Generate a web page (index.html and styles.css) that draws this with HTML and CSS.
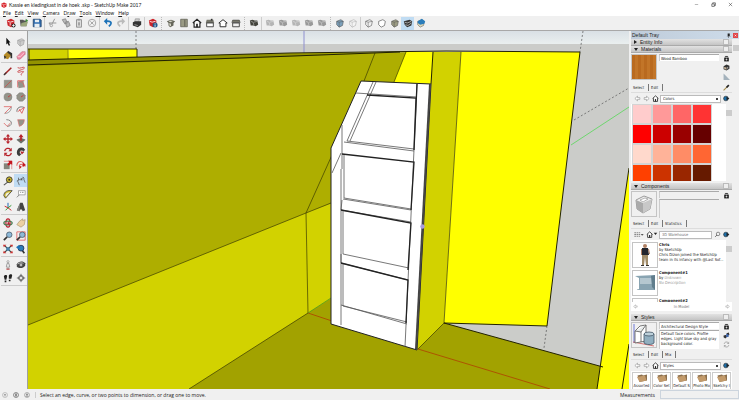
FILE: index.html
```html
<!DOCTYPE html>
<html lang="en">
  <head>
    <meta charset="UTF-8" />
    <meta name="viewport" content="width=device-width, initial-scale=1.0" />
    <title>Kassie en kledingkast in de hoek .skp - SketchUp Make 2017</title>
    <link rel="stylesheet" href="styles.css">
  </head>
  <body>
    <!-- Shared icons -->
    <svg class="sprite" aria-hidden="true">
      <symbol id="logo" viewBox="0 0 12 12"><path fill="#d9242b" d="M1 3l5-2 5 2v6l-5 3-5-3z"/><path fill="none" stroke="#fff" d="M2 4l4 2 4-2M4 7l2 1v3"/></symbol>
      <symbol id="cube" viewBox="0 0 12 12"><path stroke-width=".7" d="M2 4l5-2 3 2-1 5-4 2-3-3z"/><path fill="none" stroke-width=".6" d="M2 4l3 1 5-1M5 5v6"/></symbol>
      <symbol id="solid" viewBox="0 0 12 12"><path d="M1 3l3-1 3 1 3 0 1 5-3 2-3-1-3 0z"/><path fill="none" stroke="#eee" stroke-width=".5" d="M2 4l3 1 1 4M6 5l4-1"/></symbol>
      <symbol id="home" viewBox="0 0 12 12"><path fill="#fff" stroke="#222" stroke-width="1.400" d="M1 6l5-4.500 5 4.500M2.500 5.500V11h7V5.500"/><path fill="#222" d="M5 7h2v4H5z"/></symbol>
      <symbol id="left" viewBox="0 0 12 12"><path fill="#fff" stroke="#888" d="M1.500 6L6 2v2.500h4v3H6V10z"/></symbol>
      <symbol id="right" viewBox="0 0 12 12"><path fill="#fff" stroke="#888" d="M10.500 6L6 2v2.500H2v3h4V10z"/></symbol>
      <symbol id="pane" viewBox="0 0 12 12"><path fill="none" stroke="#222" stroke-width="1.500" d="M4 4V2.500h4V4"/><path fill="#222" d="M2 4.500h8V11H2z"/><path stroke="#fff" d="M6 6v3.500M4.300 7.800h3.400"/></symbol>
      <symbol id="detail" viewBox="0 0 12 12"><circle cx="5" cy="6" r="4" fill="#1d6fa8" stroke="#222"/><path fill="#222" d="M6 3l5 3-5 3z"/></symbol>
      <symbol id="refresh" viewBox="0 0 12 12"><path fill="none" stroke="currentColor" stroke-width="1.600" d="M2 5a4 4 0 0 1 7-2M10 7a4 4 0 0 1-7 2"/><path fill="currentColor" d="M10.500 1v4h-4zM1.500 11V7h4z"/></symbol>
      <symbol id="lens" viewBox="0 0 12 12"><path stroke="#333" stroke-width="2" d="M1 11l4-4"/><circle cx="7.500" cy="4.500" r="3.300" fill="#8db9d8" stroke="#456" stroke-width=".9"/></symbol>
      <symbol id="folder" viewBox="0 0 24 20"><path fill="#8b6f4d" d="M3 5l9-2 2 2 8-2v12L7 18z"/><path fill="#c39b6b" d="M2 8l16-3 3 10-14 3z"/></symbol>
    </svg>

    <div class="app">
      <header class="titlebar">
        <svg class="app-icon"><use href="#logo"/></svg>
        <h1>Kassie en kledingkast in de hoek .skp - SketchUp Make 2017</h1>
        <div class="window-buttons">
          <button aria-label="Minimize"><svg viewBox="0 0 12 12"><path stroke="#555" d="M2 6h8"/></svg></button>
          <button aria-label="Restore"><svg viewBox="0 0 12 12"><path fill="none" stroke="#333" stroke-width="1.500" d="M2 4.500h6v6H2zM4 4V2h6.500v6.500H8"/></svg></button>
          <button aria-label="Close"><svg viewBox="0 0 12 12"><path stroke="#333" stroke-width="1.200" d="M2 2l8 8M10 2l-8 8"/></svg></button>
        </div>
      </header>

      <nav class="menubar">
        <button><u>F</u>ile</button>
        <button><u>E</u>dit</button>
        <button><u>V</u>iew</button>
        <button><u>C</u>amera</button>
        <button>D<u>r</u>aw</button>
        <button><u>T</u>ools</button>
        <button><u>W</u>indow</button>
        <button><u>H</u>elp</button>
      </nav>

      <div class="toolbar">
        <div class="group">
          <button aria-label="New"><svg viewBox="0 0 12 12"><path fill="#cc2329" d="M1 3l5-2 4 2v6l-4 2-4-2z"/><path stroke="#fff" fill="none" d="M2 4l3 1 4-1M5 6v3"/><circle cx="9" cy="9" r="2.500" fill="#333"/><path stroke="#fff" d="M7.500 9h3M9 7.500v3"/></svg></button>
          <button aria-label="Open"><svg viewBox="0 0 12 12"><path fill="#555" d="M1 2h4l1 1h3v7H2z"/><path fill="#9aa67c" d="M3 6l8-2-2 6H2z"/><path fill="#3e8e35" d="M8 1l3 2-3 2z"/></svg></button>
          <button aria-label="Save"><svg viewBox="0 0 12 12"><path fill="#2f6db0" stroke="#24466d" d="M1.500 1.500h8l1.500 1v8H1.500z"/><path fill="#e7edf2" d="M3.500 2h5v3h-5zM3 7h6v4H3z"/></svg></button>
        </div>
        <div class="group line">
          <button aria-label="Cut"><svg viewBox="0 0 12 12"><path fill="none" stroke="#999" stroke-width="1.200" d="M8 1L5 7M1 6l9 0"/><circle cx="4" cy="9" r="1.500" fill="none" stroke="#999"/><circle cx="2" cy="7" r="1" fill="#999"/></svg></button>
          <button aria-label="Copy"><svg viewBox="0 0 12 12"><path fill="#bbb" stroke="#888" d="M1.500 2l4-1 2 5-3 1zM5 5l4-1 2 5-4 2z"/></svg></button>
          <button aria-label="Paste"><svg viewBox="0 0 12 12"><path fill="#ddd" stroke="#999" stroke-width="1.200" d="M3 2h6v9H3z"/><path fill="#999" d="M4.500 1h3v2h-3zM5 5h2v4H5z"/></svg></button>
          <button aria-label="Erase"><svg viewBox="0 0 12 12"><circle cx="6" cy="6" r="4.500" fill="none" stroke="#999"/><path stroke="#999" d="M4 4l4 4M8 4L4 8"/></svg></button>
        </div>
        <div class="group line">
          <button aria-label="Undo"><svg viewBox="0 0 12 12"><path fill="none" stroke="#1c72b8" stroke-width="2" d="M3 4c5-1 8 1 6 4L7 10"/><path fill="#1c72b8" d="M1 4l4-4v8z"/></svg></button>
          <button aria-label="Redo"><svg viewBox="0 0 12 12"><path fill="none" stroke="#bbb" stroke-width="2" d="M9 4c-5-1-8 1-6 4l2 2"/><path fill="#bbb" d="M11 4L7 0v8z"/></svg></button>
        </div>
        <div class="group line">
          <button aria-label="Print"><svg viewBox="0 0 12 12"><path fill="#ccc" stroke="#777" stroke-width=".6" d="M4 1h5l-1 4H3z"/><path fill="#333" d="M1 5l3-1h7v4l-4 3-6-2z"/><path stroke="#aaa" d="M3 8l4 1"/></svg></button>
        </div>
        <div class="group line">
          <button aria-label="Model Info"><svg viewBox="0 0 12 12"><path fill="#cc2329" d="M1 3l5-2 4 2v6l-4 2-4-2z"/><path stroke="#fff" fill="none" d="M2 4l3 1 4-1"/><circle cx="8.500" cy="8.500" r="3" fill="#245a8c"/><path stroke="#fff" d="M8.500 8v2.500M8.500 6.500v1"/></svg></button>
        </div>
        <div class="group wide">
          <button aria-label="Iso"><svg viewBox="0 0 12 12"><path fill="#66665a" d="M1 4l5-2 5 2-2 2v3l-4 2-2-2V6z"/><path fill="#d5d5c7" d="M4 6l2 1v3l-2-1zM3 4l3-1 2 1-3 1z"/></svg></button>
          <button aria-label="Top"><svg viewBox="0 0 12 12"><path fill="#9a9a84" stroke="#55554a" stroke-width=".8" d="M2 1.500h8v9H2z"/><path stroke="#55554a" d="M7 2v8"/></svg></button>
          <button aria-label="Front"><svg><use href="#home"/></svg></button>
          <button aria-label="Right"><svg viewBox="0 0 12 12"><path fill="#77776c" d="M2 2h8l1 4H1z"/><path fill="#fff" stroke="#333" d="M2 6h8v4.500H2z"/><path fill="#333" d="M7 1h2v2H7z"/></svg></button>
          <button aria-label="Back"><svg viewBox="0 0 12 12"><path fill="#fff" stroke="#333" stroke-width="1.200" d="M1 6l5-4 5 4H9.500v4.500h-7V6z"/></svg></button>
          <button aria-label="Left"><svg viewBox="0 0 12 12"><path fill="#77776c" stroke="#333" stroke-width=".6" d="M2 2.500h8l1 3H1z"/><path fill="#eee" stroke="#333" d="M2 6h8v4.500H2z"/></svg></button>
        </div>
        <div class="group wide">
          <button aria-label="Outer Shell"><svg class="dark"><use href="#solid"/></svg></button>
        </div>
        <div class="group line">
          <button aria-label="Intersect"><svg class="faint"><use href="#solid"/></svg></button>
          <button aria-label="Union"><svg class="mid"><use href="#solid"/></svg></button>
          <button aria-label="Subtract"><svg class="faint"><use href="#solid"/></svg></button>
          <button aria-label="Trim"><svg class="mid"><use href="#solid"/></svg></button>
          <button aria-label="Split"><svg class="mid"><use href="#solid"/></svg></button>
        </div>
        <div class="group wide">
          <button aria-label="X-Ray"><svg class="cube xray"><use href="#cube"/></svg></button>
          <button aria-label="Back Edges"><svg class="cube edges"><use href="#cube"/></svg></button>
        </div>
        <div class="group line">
          <button aria-label="Wireframe"><svg class="cube wire"><use href="#cube"/></svg></button>
          <button aria-label="Hidden Line"><svg viewBox="0 0 12 12"><path fill="#fff" stroke="#555" stroke-width=".8" d="M2 4l5-2 3 2-1 5-4 2-3-3z"/></svg></button>
          <button aria-label="Shaded"><svg class="cube shaded"><use href="#cube"/></svg></button>
          <button class="active" aria-label="Shaded With Textures"><svg viewBox="0 0 12 12"><path fill="#333" d="M1 4l7-2 3 2-1 5-5 2-3-3z"/><path stroke="#ddd" fill="none" stroke-width=".8" d="M2 5l3 1 5-2M3 8l3 1 4-3"/></svg></button>
          <button aria-label="Monochrome"><svg viewBox="0 0 12 12"><path fill="#ddd9b8" stroke="#555" stroke-width=".6" d="M2 4l5-2 3 2-1 5-4 2-3-3z"/><path fill="#2b7dbb" d="M2 4l5-3 4 3-1 3-5 1-3-2z"/></svg></button>
        </div>
      </div>

      <main class="workspace">
        <aside class="tools">
          <div class="tool-group">
            <button aria-label="Select"><svg viewBox="0 0 12 12"><path fill="#111" d="M4 1l5 5.500H7L8.500 10 7 10.500 5.500 7.500 4 9z"/></svg></button>
            <button aria-label="Make Component"><svg class="cube component"><use href="#cube"/></svg></button>
            <button aria-label="Paint Bucket"><svg viewBox="0 0 12 12"><path fill="#b58b26" d="M1 6l4-4 5 4-4 5-4-1z"/><path fill="#333" d="M6 1l5 3v6H9V6L5 3zM1 7l3 1-2 3z"/></svg></button>
            <button aria-label="Eraser"><svg viewBox="0 0 12 12"><path fill="#f18ba5" stroke="#b46277" stroke-width=".6" d="M1 8l6-6h4v3l-6 6H2z"/><path stroke="#fbd3dc" fill="none" d="M2 8h3l5-5"/></svg></button>
          </div>
          <div class="tool-group">
            <button aria-label="Line"><svg viewBox="0 0 12 12"><path stroke="#a52323" stroke-width="1.800" d="M2 10l8-8"/><path stroke="#333" stroke-width="1.500" d="M1 11l3-3"/></svg></button>
            <button aria-label="Freehand"><svg viewBox="0 0 12 12"><path fill="none" stroke="#cf5357" stroke-width="1.200" d="M2 2c3 2 7-2 8 0S2 5 2 7s8-2 7 0-5 3-2 4"/></svg></button>
            <button aria-label="Rectangle"><svg viewBox="0 0 12 12"><path fill="#94948a" stroke="#777" stroke-width=".5" d="M1.500 1.500h9v9h-9z"/><path stroke="#c94d4d" stroke-width=".9" d="M2 10l8-8"/></svg></button>
            <button aria-label="Rotated Rectangle"><svg viewBox="0 0 12 12"><path fill="#94948a" d="M2 3l7-1 1 8-7 1z"/><path fill="none" stroke="#d66" d="M2 10V2h8M4 3c4 0 6 3 6 7"/></svg></button>
            <button aria-label="Circle"><svg viewBox="0 0 12 12"><circle cx="6" cy="6" r="4.800" fill="#94948a" stroke="#777" stroke-width=".5"/><path stroke="#c33" d="M6 6l3-2"/></svg></button>
            <button aria-label="Polygon"><svg viewBox="0 0 12 12"><path fill="#94948a" stroke="#777" stroke-width=".5" d="M4 1h4l3 3v4l-3 3H4L1 8V4z"/><path stroke="#c33" d="M6 6l3-2"/></svg></button>
            <button aria-label="Arc"><svg viewBox="0 0 12 12"><path fill="none" stroke="#888" d="M2 10c5 0 8-3 8-8"/><path stroke="#d66" fill="none" d="M1 2h9L2 10"/></svg></button>
            <button aria-label="2 Point Arc"><svg viewBox="0 0 12 12"><path fill="none" stroke="#777" stroke-width="1.200" d="M1 8c0-5 4-7 9-5"/><path fill="none" stroke="#d55" d="M2 8l8-5-3 7-3-5"/></svg></button>
            <button aria-label="3 Point Arc"><svg viewBox="0 0 12 12"><path fill="none" stroke="#888" stroke-width="1.200" d="M4 2c8 0 8 8 1 8"/><path fill="none" stroke="#d66" d="M1 6l4 4 4-4"/></svg></button>
            <button aria-label="Pie"><svg viewBox="0 0 12 12"><path fill="#94948a" stroke="#d66" stroke-width=".7" d="M2 2h8c0 4-2 7-6 8z"/></svg></button>
          </div>
          <div class="tool-group">
            <button aria-label="Move"><svg viewBox="0 0 12 12"><path stroke="#b7232c" stroke-width="1.600" d="M6 2v8M2 6h8"/><path fill="#b7232c" d="M6 0l2.500 3h-5zM6 12l2.500-3h-5zM0 6l3-2.500v5zM12 6L9 3.500v5z"/></svg></button>
            <button aria-label="Push/Pull"><svg viewBox="0 0 12 12"><path fill="#6f7067" stroke="#444" stroke-width=".5" d="M1 7l5-2 5 2-5 4z"/><path fill="#b7232c" d="M5 8V4H3l3-4 3 4H7v4z"/></svg></button>
            <button class="red" aria-label="Rotate"><svg><use href="#refresh"/></svg></button>
            <button aria-label="Follow Me"><svg viewBox="0 0 12 12"><path fill="none" stroke="#3c3c3c" stroke-width="3.500" d="M9 3C5 1 2 4 3 8l2 2"/><path fill="#b7232c" d="M5 5l5 1-3 3z"/><path fill="#444" d="M7 1l4 2-2 3z"/></svg></button>
            <button aria-label="Scale"><svg viewBox="0 0 12 12"><path fill="none" stroke="#d66" stroke-width=".8" d="M1 1.500h9.500V11"/><path fill="#85857b" d="M1 4h7v7H1z"/><path fill="#c4161f" d="M11 1v5L9.500 4.500 7 7 5 5l2.500-2.500L6 1z"/></svg></button>
            <button aria-label="Offset"><svg viewBox="0 0 12 12"><path fill="none" stroke="#d66" stroke-width="1.300" d="M1 7C1 0 9 0 11 8M4 8c0-4 4-4 5 0"/><path fill="#c4161f" d="M8 3l4 3-4 2zM4 7l3 1-3 3z"/></svg></button>
          </div>
          <div class="tool-group">
            <button aria-label="Tape Measure"><svg viewBox="0 0 12 12"><path stroke="#555" stroke-width="1.300" d="M1 11l5-4"/><circle cx="7.500" cy="4.500" r="3.500" fill="#c9b52d" stroke="#333"/><circle cx="7.500" cy="4.500" r="1.200" fill="#333"/></svg></button>
            <button class="active" aria-label="Dimension"><svg viewBox="0 0 12 12"><path fill="none" stroke="#555" stroke-width=".9" d="M1 6l8-4M3 5v-3M2 6l2 5M9 3l2 5M8 1l2 2"/><path fill="#555" d="M5 5l2-2 1 2z"/></svg></button>
            <button aria-label="Protractor"><svg viewBox="0 0 12 12"><path fill="#d1bd37" stroke="#444" d="M1 8c0-5 5-7 10-6L3 11z"/><path fill="#f0f0f0" d="M3 8c0-3 3-4 5-4L4 9z"/></svg></button>
            <button aria-label="Text"><svg viewBox="0 0 12 12"><path fill="#fff" stroke="#888" stroke-width=".8" d="M3 2h8v5H3z"/><path fill="none" stroke="#555" stroke-width=".8" d="M5 4h1m1 0h2M1 10l3-3"/></svg></button>
            <button aria-label="Axes"><svg viewBox="0 0 12 12"><path stroke="#2468b2" stroke-width="1.200" d="M6 1v6"/><path stroke="#c33" stroke-width="1.200" d="M6 7L2 5m4 2l4 3"/><path stroke="#3a9a3a" stroke-width="1.200" d="M6 7l4-3M6 7l-3 3"/></svg></button>
            <button aria-label="3D Text"><svg viewBox="0 0 12 12"><path fill="#444" d="M5 1h3l3 9-3 1-1-2H5l-1 2-3-1z"/><path fill="#888" d="M5 1l-1 10-3-1z"/></svg></button>
          </div>
          <div class="tool-group">
            <button aria-label="Orbit"><svg viewBox="0 0 12 12"><ellipse cx="6" cy="6" rx="2.500" ry="5" fill="none" stroke="#b23" stroke-width="1.500"/><ellipse cx="6" cy="6" rx="5" ry="2.300" fill="none" stroke="#4a7b50" stroke-width="1.500"/><path fill="#b23" d="M6 4l3 4H5z"/></svg></button>
            <button aria-label="Pan"><svg viewBox="0 0 12 12"><path fill="#ecd0a2" stroke="#a28d68" stroke-width=".7" d="M1 8l3-4 4-3v2l3-1-1 6-4 3z"/></svg></button>
            <button aria-label="Zoom"><svg><use href="#lens"/></svg></button>
            <button aria-label="Zoom Window"><svg viewBox="0 0 12 12"><path fill="none" stroke="#e05050" stroke-width=".9" d="M1 1h10v10H1z"/><use href="#lens"/></svg></button>
            <button aria-label="Zoom Extents"><svg viewBox="0 0 12 12"><path stroke="#444" stroke-width="1.500" d="M2 2l8 8M10 2l-8 8"/><path fill="#c33" d="M0 1h4L1 4zM12 1H8l3 3zM0 11h4L1 8zM12 11H8l3-3z"/><circle cx="6" cy="6" r="2.300" fill="#4684ae"/></svg></button>
            <button aria-label="Previous"><svg viewBox="0 0 12 12"><path stroke="#333" stroke-width="2" d="M7 7l3 4"/><circle cx="6" cy="5" r="3.500" fill="#2e7db6" stroke="#235"/><path fill="#1c72b8" d="M0 4l4-3v6z"/></svg></button>
          </div>
          <div class="tool-group">
            <button aria-label="Position Camera"><svg viewBox="0 0 12 12"><circle cx="6" cy="2" r="1.300" fill="#eee" stroke="#777" stroke-width=".6"/><path fill="#eee" stroke="#777" stroke-width=".8" d="M5 4h2l1 4H7v3H5V8H4z"/><path stroke="#c33" d="M4 11h4"/></svg></button>
            <button aria-label="Look Around"><svg viewBox="0 0 12 12"><path fill="#444" d="M1 5c2-4 8-4 10-1v3c-3 4-8 3-10 1z"/><circle cx="6" cy="6" r="1.700" fill="#bbb"/><path stroke="#ccc" fill="none" d="M2 5c2-2 5-2 7-1"/></svg></button>
            <button aria-label="Walk"><svg viewBox="0 0 12 12"><path fill="#222" d="M1 4c1-2 4-2 4 0l-1 4H2zM2 9h2v2H2zM7 3c1-2 4-2 4 0l-1 4H7zM7 8h2v2H7z"/></svg></button>
            <button aria-label="Section Plane"><svg viewBox="0 0 12 12"><circle cx="6" cy="6" r="3" fill="#bbb" stroke="#555" stroke-width=".9"/><path stroke="#555" d="M6 1v10M1 6h10"/><circle cx="6" cy="6" r="1.300" fill="#fff"/></svg></button>
          </div>
        </aside>

        <!-- Model viewport -->
        <svg class="viewport" viewBox="28 31 601 358" preserveAspectRatio="none" role="img" aria-label="Model view">
          <defs>
            <linearGradient id="sky" x2="0" y2="1"><stop offset="0" stop-color="#d9e0e5"/><stop offset="1" stop-color="#eaefef"/></linearGradient>
          </defs>
          <path fill="#cbccc9" d="M28 31h601v358H28z"/>
          <path fill="url(#sky)" d="M28 31h601v13H28z"/>
          <g stroke="#555" stroke-width=".7" stroke-dasharray="2 2">
            <path d="M136 31v18M583 31l-3 21M574 120l55-32M547 326l-3 22"/>
          </g>
          <path stroke="#8f90cf" d="M304 31v22"/>
          <path stroke="#58d858" stroke-width=".8" d="M571 145l58-38"/>

          <!-- walls -->
          <path fill="#d2d200" d="M28 49h40l1 11H29z"/>
          <path fill="#ff0" d="M68 49h69v9l-68 2z"/>
          <path fill="none" stroke="#333300" d="M28 49h109v9M29 49v11"/>
          <path stroke="#777700" stroke-width=".7" d="M68 49v10"/>
          <path fill="#aeae00" d="M28 60l262-7 143-1-15 298-87-26-3 65H28z"/>
          <path fill="#929200" d="M28 60l230-6 120-1L200 60 28 66z"/>
          <path fill="#d2d200" d="M28 325l278-112 26-10v95l-24 15-119 76H28z"/>
          <path fill="#a2a200" d="M189 389l119-76 24-15 112 25 159 44-6 22z"/>
          <path fill="#ff0" d="M406 52h28l-3 32-37-2z"/>
          <path fill="#d2d200" d="M433 52h28l-17 271-27 27z"/>
          <path fill="#ff0" d="M461 52h119l-33 274-103-3zM629 168v221h-32z"/>
          <g fill="none" stroke="#3c3c00" stroke-width=".7">
            <path d="M28 325l278-112 25-10M306 213l2 100M306 213l26-58M364 81l11-28M394 82l12-30M189 389l119-76M461 52l-17 271-26 26"/>
          </g>
          <path fill="none" stroke="#222200" d="M28 60l262-7 156-2 134 1-33 274-103-3 159 44M28 65l212-7 160-6M433 52l-2 32M629 168l-32 221"/>
          <path stroke="#222200" d="M629 344l-7 45"/>
          <path stroke="#b04000" stroke-width=".8" d="M308 313l24 8M418 349l132 40"/>
          <path stroke="#4c9c20" stroke-width=".8" d="M308 313l23-15"/>

          <!-- wardrobe door -->
          <path fill="#fff" stroke="#222" d="M361 81l70 3-14 266-86-26V148z"/>
          <path fill="#444" d="M429 84h2l-14 266-2-1z"/>
          <g fill="none" stroke="#555" stroke-width=".8">
            <path d="M417 84l-12 263M342 125v44M341 169v156M356 93l61 4M332 173l9-20M373 82L347 141M376 82L350 141M344 142l70 9M347 141l67 8M343 199l68 11M342 200l-1 10 70 12M344 154v44l67 11M343 211v43l66 14M341 254v9l67 17M343 264v42l64 16M341 305l66 19"/>
          </g>
          <g fill="none" stroke="#222" stroke-width="1.300">
            <path d="M367 95l49 3-2 51M342 154l72 8-3 48M341 210l70 13-3 47M341 263l67 17-2 43M417 84l-3 66"/>
          </g>
          <circle cx="422.500" cy="226.500" r="2.200" fill="#a99be0"/>
        </svg>

        <aside class="tray">
          <div class="tray-title">
            <h2>Default Tray</h2>
            <button aria-label="Auto hide"><svg viewBox="0 0 12 12"><path fill="#222" d="M4 1h5v6h2v1H7v4H6V8H2V7h2z"/></svg></button>
            <button class="tray-close" aria-label="Close tray"><svg viewBox="0 0 12 12"><path stroke="#fff" stroke-width="1.500" d="M4 4l4 4M8 4L4 8"/></svg></button>
          </div>
          <div class="tray-body">
            <div class="tray-main">
              <section>
                <button class="section-head closed"><span>Entity Info</span></button>
              </section>

              <section class="materials">
                <button class="section-head"><span>Materials</span></button>
                <div class="summary">
                  <div class="thumb bamboo"></div>
                  <div class="fields"><input type="text" value="Wood Bamboo" aria-label="Material name"></div>
                  <div class="side">
                    <button aria-label="Secondary pane"><svg><use href="#pane"/></svg></button>
                    <button aria-label="Create material"><svg viewBox="0 0 12 12"><path fill="#333" d="M1 4l5-3 5 2v5l-5 3-5-2z"/><path fill="#c9b59a" d="M2 5l4 1v4L2 8z"/><path stroke="#fff" d="M8 5v3"/></svg></button>
                    <button aria-label="Default material"><svg viewBox="0 0 12 12"><path fill="#a4b2bc" d="M1 1l11 11H1z"/></svg></button>
                  </div>
                </div>
                <div class="tabs">
                  <button>Select</button><button>Edit</button>
                  <button class="dropper" aria-label="Sample paint"><svg viewBox="0 0 12 12"><path stroke="#a58b4a" stroke-width="1.800" d="M1 11l6-6"/><path stroke="#222" stroke-width="3" d="M6 6l4-4"/></svg></button>
                </div>
                <div class="nav">
                  <button aria-label="Back"><svg><use href="#left"/></svg></button>
                  <button aria-label="Forward"><svg><use href="#right"/></svg></button>
                  <button aria-label="In Model"><svg><use href="#home"/></svg></button>
                  <select aria-label="Material library"><option>Colors</option></select>
                  <button aria-label="Details"><svg><use href="#detail"/></svg></button>
                </div>
                <div class="library">
                  <div class="swatches">
                    <button class="r1" aria-label="Red 1"></button><button class="r2" aria-label="Red 2"></button><button class="r3" aria-label="Red 3"></button><button class="r4" aria-label="Red 4"></button>
                    <button class="r5" aria-label="Red 5"></button><button class="r6" aria-label="Red 6"></button><button class="r7" aria-label="Red 7"></button><button class="r8" aria-label="Red 8"></button>
                    <button class="o1" aria-label="Orange 1"></button><button class="o2" aria-label="Orange 2"></button><button class="o3" aria-label="Orange 3"></button><button class="o4" aria-label="Orange 4"></button>
                    <button class="o5" aria-label="Orange 5"></button><button class="o6" aria-label="Orange 6"></button><button class="o7" aria-label="Orange 7"></button><button class="o8" aria-label="Orange 8"></button>
                  </div>
                  <div class="scrollbar"></div>
                </div>
              </section>

              <section class="components">
                <button class="section-head"><span>Components</span></button>
                <div class="summary">
                  <div class="thumb">
                    <svg viewBox="0 0 24 24"><path fill="#eee" stroke="#777" stroke-width=".7" d="M4 8l8-4 8 3-2 10-7 4-6-4z"/><path fill="#aaa" d="M4 8l7 3v10l-6-4z"/><path fill="#c8c8c8" d="M11 11l9-4-2 10-7 4z"/><path fill="#fff" stroke="#888" stroke-width=".6" d="M8 8l5-2 3 1-5 3z"/></svg>
                  </div>
                  <div class="fields">
                    <input type="text" class="flat" aria-label="Component name">
                    <textarea class="flat" aria-label="Component description"></textarea>
                  </div>
                  <div class="side"><button aria-label="Secondary pane"><svg><use href="#pane"/></svg></button></div>
                </div>
                <div class="tabs"><button>Select</button><button>Edit</button><button>Statistics</button></div>
                <div class="nav">
                  <button class="view-mode" aria-label="View options"><svg viewBox="0 0 18 12"><path stroke="#666" stroke-width="1.300" stroke-dasharray="3 1" d="M1 3h10M1 6h10M1 9h10"/><path fill="#555" d="M12 5h5l-2.500 3z"/></svg></button>
                  <button class="in-model" aria-label="In Model"><svg viewBox="0 0 20 12"><use href="#home" width="12" height="12"/><path fill="#222" d="M13 3h6l-3 4z"/></svg></button>
                  <input type="search" placeholder="3D Warehouse" aria-label="Search 3D Warehouse">
                  <button aria-label="Search"><svg viewBox="0 0 12 12"><circle cx="7" cy="5" r="3" fill="none" stroke="#444"/><path stroke="#444" stroke-width="1.300" d="M2 10l3-3"/></svg></button>
                  <button aria-label="Details"><svg><use href="#detail"/></svg></button>
                </div>
                <div class="library">
                  <ul class="results">
                    <li>
                      <div class="thumb"><svg viewBox="0 0 24 24"><circle cx="12" cy="3" r="2" fill="#b08062"/><path fill="#22252d" d="M9 5h6l1 7H9z"/><path fill="#b08062" d="M8 6h1v6H8zM15 6l1 0 1 5h-1z"/><path fill="#a08b68" d="M9 12h6v10h-2l-1-8-1 8H9z"/><path fill="#333" d="M8 22h3v1H8zM13 22h3v1h-3z"/></svg></div>
                      <div><strong>Chris</strong><p>by SketchUp</p><p>Chris Dizon joined the SketchUp team in its infancy with @Last Sof...</p></div>
                    </li>
                    <li>
                      <div class="thumb"><svg viewBox="0 0 24 24"><path fill="#89a4b2" d="M2 5l20-1v15l-18 0z"/><path fill="#fff" d="M2 5l4 2v11l-4 1z"/><path fill="#b5c7d0" d="M7 7h14v6H7z"/><path fill="#607d8c" d="M18 5l4-1v15l-3-3z"/></svg></div>
                      <div><strong>Component#1</strong><p>by <i>Unknown</i></p><p><i>No Description</i></p></div>
                    </li>
                    <li>
                      <div class="thumb"></div>
                      <div><strong>Component#2</strong></div>
                    </li>
                  </ul>
                  <div class="scrollbar"></div>
                </div>
                <div class="pager">
                  <button aria-label="Previous"><svg><use href="#left"/></svg></button>
                  <span>In Model</span>
                  <button aria-label="Next"><svg><use href="#right"/></svg></button>
                </div>
              </section>

              <section class="styles">
                <button class="section-head"><span>Styles</span></button>
                <div class="summary">
                  <div class="thumb"><svg viewBox="0 0 24 24"><path stroke="#4b5bd0" stroke-width=".8" d="M2 1v19"/><path stroke="#c55" stroke-width=".8" d="M1 19l21 4"/><path fill="#fff" stroke="#555" stroke-width=".8" d="M3 8l5-5 6-1v16l-11 2z"/><path fill="#e5e9ea" stroke="#555" stroke-width=".8" d="M3 8l6 1 5-7M9 9v10"/><path fill="#91afc0" stroke="#456" stroke-width=".8" d="M12 11v9c2 2 8 2 10 0v-9z"/><ellipse cx="17" cy="11" rx="5" ry="2" fill="#bcd0da" stroke="#456" stroke-width=".8"/></svg></div>
                  <div class="fields">
                    <input type="text" value="Architectural Design Style" aria-label="Style name">
                    <textarea aria-label="Style description">Default face colors. Profile edges. Light blue sky and gray background color.</textarea>
                  </div>
                  <div class="side">
                    <button aria-label="Secondary pane"><svg><use href="#pane"/></svg></button>
                    <button aria-label="Create style"><svg viewBox="0 0 12 12"><path fill="#333" d="M1 6l4-1 2 3-3 3-3-2zM6 2l4-1 1 4-4 2z"/><path fill="#3d66b0" d="M5 4l4 0 1 4-4 1z"/></svg></button>
                    <button class="gray" aria-label="Update style"><svg><use href="#refresh"/></svg></button>
                  </div>
                </div>
                <div class="tabs"><button>Select</button><button>Edit</button><button>Mix</button></div>
                <div class="nav">
                  <button aria-label="Back"><svg><use href="#left"/></svg></button>
                  <button aria-label="Forward"><svg><use href="#right"/></svg></button>
                  <button aria-label="In Model"><svg><use href="#home"/></svg></button>
                  <select aria-label="Style library"><option>Styles</option></select>
                  <button aria-label="Details"><svg><use href="#detail"/></svg></button>
                </div>
                <div class="folders">
                  <button><svg><use href="#folder"/></svg>Assorted</button>
                  <button><svg><use href="#folder"/></svg>Color Set</button>
                  <button><svg><use href="#folder"/></svg>Default S</button>
                  <button><svg><use href="#folder"/></svg>Photo Mo</button>
                  <button><svg><use href="#folder"/></svg>Sketchy I</button>
                </div>
              </section>
            </div>
            <div class="scrollbar"></div>
          </div>
        </aside>
      </main>

      <footer class="statusbar">
        <button aria-label="Geo-location"><svg viewBox="0 0 12 12"><circle cx="6" cy="6" r="5" fill="#eee" stroke="#999"/><path fill="#999" d="M4 4h4L6 10z"/></svg></button>
        <button aria-label="Credits"><svg viewBox="0 0 12 12"><circle cx="6" cy="6" r="5" fill="#eee" stroke="#333"/><path stroke="#333" stroke-width="2" d="M6 3v6"/></svg></button>
        <button aria-label="Sign in"><svg viewBox="0 0 12 12"><circle cx="6" cy="6" r="5" fill="#eee" stroke="#777"/><circle cx="6" cy="4.500" r="1.700" fill="#777"/><path fill="#777" d="M3 9c0-3 6-3 6 0z"/></svg></button>
        <p>Select an edge, curve, or two points to dimension, or drag one to move.</p>
        <label for="measurements">Measurements</label>
        <input id="measurements" type="text">
      </footer>
    </div>
  </body>
</html>
```

FILE: styles.css
```css
* {
  margin: 0;
  padding: 0;
  box-sizing: border-box;
}

body {
  font-family: 'Open Sans', 'Noto Sans', sans-serif;
  font-size: 5px;
  line-height: 6px;
  color: #222;
  background: #f0f0f0;
}

button,
input,
select,
textarea {
  font: inherit;
  color: inherit;
  border: 0;
  border-radius: 0;
  background: none;
}

button {
  display: flex;
  align-items: center;
  justify-content: center;
}

svg {
  display: block;
}

.sprite {
  display: none;
}

.app {
  display: flex;
  flex-direction: column;
  height: 100vh;
  overflow: hidden;
}

/* Title and menu */
.titlebar {
  display: flex;
  align-items: center;
  gap: 2px;
  height: 9px;
  padding-left: 1px;
  background: #fff;
}

.titlebar h1 {
  flex: 1;
  font-family: Lato, sans-serif;
  font-size: 5px;
  font-weight: 400;
}

.app-icon {
  width: 6px;
  height: 6px;
}

.window-buttons {
  display: flex;
}

.window-buttons button {
  width: 17px;
  height: 9px;
}

.window-buttons svg {
  width: 5px;
  height: 5px;
}

.menubar {
  display: flex;
  gap: 4px;
  height: 7px;
  padding-left: 3px;
  font-family: Lato, sans-serif;
  background: #fff;
}

/* Top toolbar */
.toolbar {
  display: flex;
  align-items: center;
  height: 15px;
  padding-left: 4px;
  border-bottom: 1px solid #a8a8a8;
}

.group {
  display: flex;
}

.group.line {
  margin-left: 1px;
  padding-left: 1px;
  border-left: 1px solid #ccc;
}

.group.wide {
  margin-left: 2px;
  padding-left: 2px;
  border-left: 1px dotted #bbb;
}

.group button,
.tool-group button {
  width: 13px;
  height: 13px;
}

.group svg,
.tool-group svg {
  width: 10px;
  height: 10px;
}

.group .active,
.tool-group .active {
  background: #c0dcf3;
}

.dark { fill: #44443c; }
.mid { fill: #999; }
.faint { fill: #b5b5b5; }
.cube { stroke: #555; }
.xray { fill: #7ba0bb; }
.edges { fill: #f4f4f4; stroke: #aaa; }
.wire { fill: none; }
.shaded { fill: #9c9c83; }
.component { fill: #ccc; stroke: #999; }
.red { color: #b7232c; }
.gray { color: #aaa; }

.workspace {
  display: flex;
  flex: 1;
  min-height: 0;
}

/* Left tool palette */
.tools {
  flex: none;
  width: 28px;
  padding: 4px 0 0 1px;
  border-right: 1px solid #a0a0a0;
}

.tool-group {
  display: grid;
  grid-template-columns: 13px 13px;
  padding-bottom: 1px;
  margin-bottom: 1px;
  border-bottom: 1px solid #ccc;
}

.viewport {
  flex: 1;
  min-width: 0;
  height: 100%;
}

/* Tray */
.tray {
  flex: none;
  display: flex;
  flex-direction: column;
  width: 110px;
  padding-left: 2px;
  overflow: hidden;
  font-family: 'DejaVu Sans Condensed', 'DejaVu Sans', sans-serif;
  font-size: 4px;
}

.tray-title {
  flex: none;
  display: flex;
  align-items: center;
  gap: 2px;
  height: 8px;
  padding: 0 1px;
  background: linear-gradient(90deg, #bfccda, #cddbe9);
}

.tray-title h2 {
  flex: 1;
  font-family: 'Liberation Sans', Arial, sans-serif;
  font-size: 5px;
  font-weight: 400;
}

.tray-title svg {
  width: 5px;
  height: 5px;
}

.tray-title .tray-close {
  background: #e0474b;
}

.tray-body {
  flex: 1;
  display: flex;
  gap: 1px;
  min-height: 0;
}

.tray-main {
  flex: 1;
  min-width: 0;
}

.section-head {
  justify-content: flex-start;
  gap: 3px;
  width: 100%;
  height: 7px;
  padding: 0 3px;
  font-family: 'Liberation Sans', Arial, sans-serif;
  font-size: 5px;
  background: linear-gradient(#e2e2e2, #c4c4c4);
  border-bottom: 1px solid #aaa;
}

.section-head::before {
  content: '';
  border: 2px solid transparent;
  border-top: 3px solid #222;
  border-bottom: 0;
}

.section-head.closed::before {
  border: 2px solid transparent;
  border-left: 3px solid #222;
  border-right: 0;
}

.section-head::after {
  content: '';
  width: 4px;
  height: 4px;
  margin-left: auto;
  background: #eee;
  border: 1px solid #bbb;
}

.summary {
  display: flex;
  gap: 2px;
  height: 28px;
  padding: 1px 2px 0 0;
}

.thumb {
  flex: none;
  width: 26px;
  height: 26px;
  border: 1px solid #c4c4c4;
}

.thumb svg {
  width: 24px;
  height: 24px;
}

.bamboo {
  background: repeating-linear-gradient(90deg, #b96a1f 0 3px, #c27528 3px 6px);
}

.fields {
  flex: 1;
  min-width: 0;
  display: flex;
  flex-direction: column;
  gap: 1px;
}

.fields input,
.fields textarea {
  width: 100%;
  background: #fff;
  border-top: 1px solid #aaa;
  border-left: 1px solid #ccc;
}

.fields input {
  height: 7px;
  padding-left: 1px;
}

.fields textarea {
  flex: 1;
  padding-left: 1px;
  resize: none;
  overflow: hidden;
  line-height: 5px;
}

.fields .flat {
  background: none;
}

.side {
  width: 9px;
  display: flex;
  flex-direction: column;
  align-items: flex-end;
  gap: 1px;
}

.side button {
  width: 8px;
  height: 8px;
}

.side svg {
  width: 7px;
  height: 7px;
}

.tabs {
  display: flex;
  align-items: center;
  height: 11px;
  padding: 1px 2px 0 0;
  border-bottom: 1px solid #ddd;
}

.tabs button {
  height: 7px;
  padding: 0 4px 0 2px;
  border-right: 1px solid #777;
}

.tabs .dropper {
  margin-left: auto;
  padding: 0;
  border: 0;
}

.tabs .dropper svg {
  width: 7px;
  height: 7px;
}

.nav {
  display: flex;
  align-items: center;
  gap: 1px;
  height: 11px;
  padding: 0 2px;
}

.nav button {
  flex: none;
  width: 8px;
  height: 8px;
}

.nav svg {
  width: 7px;
  height: 7px;
}

.nav select,
.nav input {
  flex: 1;
  min-width: 0;
  height: 8px;
  padding-left: 2px;
  background: #fff;
  border: 1px solid #bbb;
}

.nav select {
  appearance: none;
  background: linear-gradient(#444, #444) right 2px center / 2px 2px no-repeat, #fff;
  line-height: 6px;
}

.nav .view-mode,
.nav .in-model {
  width: 12px;
}

.nav .view-mode svg,
.nav .in-model svg {
  width: 12px;
}

.library {
  display: flex;
  background: #fff;
  overflow: hidden;
}

.scrollbar {
  flex: none;
  width: 6px;
  margin-left: auto;
  background: linear-gradient(#ccc, #ccc) 0 6px / 6px 6px no-repeat, #f0f0f0;
}

/* Materials */
.materials {
  margin-bottom: 2px;
}

.materials .summary {
  height: 29px;
}

.materials .library {
  height: 77px;
}

.swatches {
  display: grid;
  grid-template-columns: repeat(4, 20px);
  grid-auto-rows: 20px;
  padding-left: 1px;
}

.swatches button {
  border: 1px solid #d4d4d4;
}

.r1 { background: #fcc; }
.r2 { background: #f99; }
.r3 { background: #f66; }
.r4 { background: #f33; }
.r5 { background: #f00; }
.r6 { background: #c00; }
.r7 { background: #900; }
.r8 { background: #600; }
.o1 { background: #ffd9cc; }
.o2 { background: #ffb399; }
.o3 { background: #ff8c66; }
.o4 { background: #f63; }
.o5 { background: #ff4000; }
.o6 { background: #c30; }
.o7 { background: #992600; }
.o8 { background: #661a00; }

/* Components */
.components .library {
  height: 62px;
}

.results {
  flex: 1;
  min-width: 0;
  padding: 2px 0 0 1px;
  list-style: none;
}

.results li {
  display: flex;
  gap: 1px;
  height: 28px;
  line-height: 5px;
}

.results li > div:last-child {
  flex: 1;
  min-width: 0;
}

.results strong {
  display: block;
}

.results i {
  color: #999;
}

.pager {
  display: flex;
  align-items: center;
  justify-content: space-between;
  height: 9px;
  padding: 0 2px;
  margin-bottom: 3px;
  background: #fff;
  color: #777;
}

.pager svg {
  width: 5px;
  height: 5px;
}

/* Styles */
.folders {
  display: flex;
  gap: 1px;
  padding: 1px;
  background: #fff;
}

.folders button {
  flex: 1;
  min-width: 0;
  flex-direction: column;
  justify-content: flex-start;
  height: 20px;
  line-height: 5px;
  white-space: nowrap;
  border: 1px solid #ccc;
}

.folders svg {
  flex: none;
  width: 14px;
  height: 10px;
}

/* Status bar */
.statusbar {
  display: flex;
  align-items: center;
  gap: 5px;
  height: 11px;
  padding-left: 2px;
}

.statusbar button svg {
  width: 6px;
  height: 6px;
}

.statusbar p {
  flex: 1;
  padding-left: 4px;
  border-left: 1px solid #ccc;
}

.statusbar input {
  width: 79px;
  height: 9px;
  border: 1px solid #ccd4dd;
}
```
